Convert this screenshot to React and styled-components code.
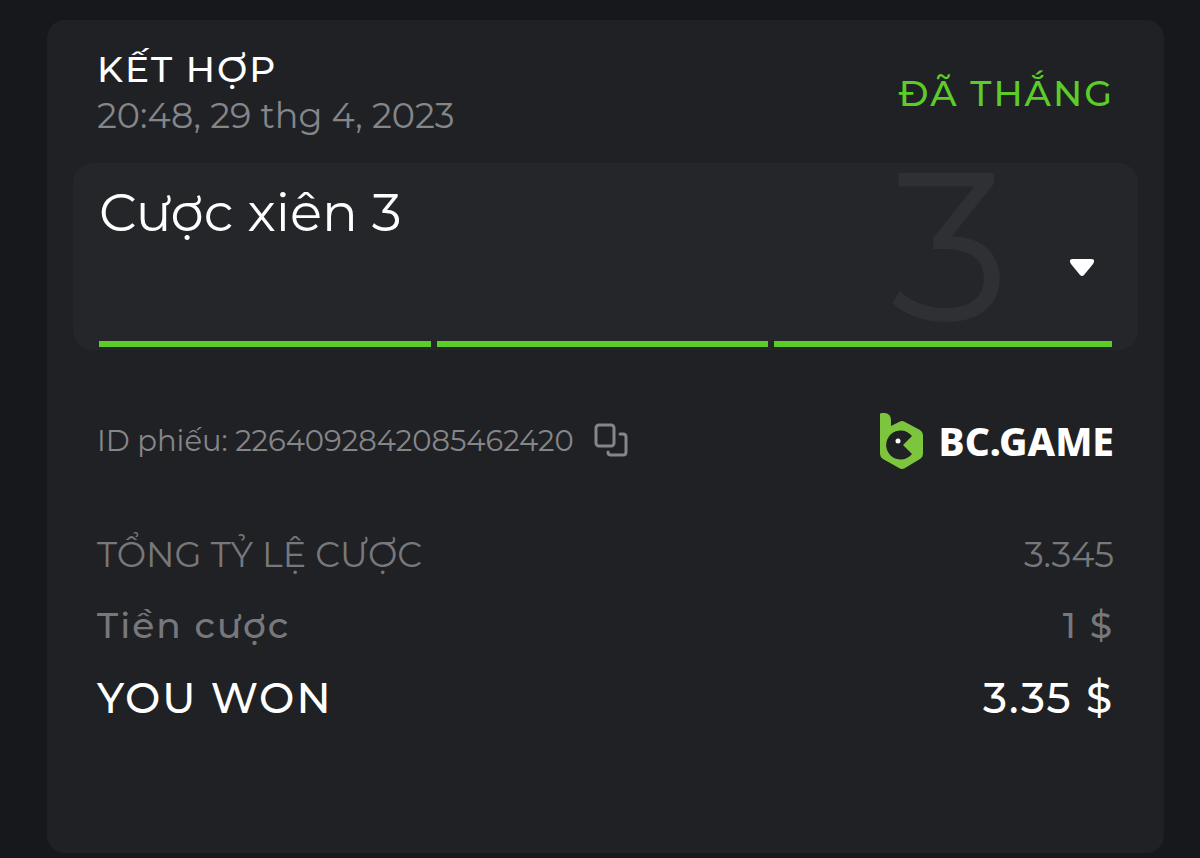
import React, { useState } from 'react'
import styled, { createGlobalStyle } from 'styled-components'

const legs = ['won', 'won', 'won']

const totals = [
    { label: 'TỔNG TỶ LỆ CƯỢC', value: '3.345' },
    { label: 'Tiền cược', value: '1 $', spaced: true },
    { label: 'YOU WON', value: '3.35 $', strong: true, spaced: true },
]

const ticketId = '2264092842085462420'

const CopyIcon = () => (
    <svg width='34' height='34' viewBox='0 0 34 34' fill='none' stroke='currentColor' strokeWidth='3' strokeLinecap='round'>
        <rect x='2' y='2' width='18' height='21' rx='3' />
        <path d='M26 11h3q3 0 3 3v15q0 3-3 3H17q-3 0-3-3' />
    </svg>
)

const LogoMark = () => (
    <svg width='44' height='58' viewBox='0 0 44 58'>
        <path fill='#7cc53d' d='M0 2Q0 1 2 1H5Q11 2 11 8V14L19 10Q22 8 25 10L40 18Q43 20 43 23V42Q43 45 40 47L25 56Q22 58 19 56L3 47Q0 45 0 42Z' />
        <path fill='#202124' d='M32 24L23 33L32 42A14.500 14.500 0 1 1 32 24Z' />
        <circle fill='#fff' cx='18' cy='29' r='2.500' />
    </svg>
)

const App = () => {

    const [open, setOpen] = useState(false)

    const copyId = () => {
        if (navigator.clipboard) navigator.clipboard.writeText(ticketId)
    }

    return <Page>
        <GlobalStyle />
        <Card>
            <Header>
                <div>
                    <Kind>KẾT HỢP</Kind>
                    <Placed>20:48, 29 thg 4, 2023</Placed>
                </div>
                <Status>ĐÃ THẮNG</Status>
            </Header>
            <Panel>
                <PanelBody>
                    <PanelTitle>Cược xiên 3</PanelTitle>
                    <Count aria-hidden='true'>3</Count>
                    <Toggle type='button' aria-label='Chi tiết' aria-expanded={open} onClick={() => setOpen(!open)}>
                        <svg width='24' height='18' viewBox='0 0 24 18'>
                            <path fill='currentColor' d='M3 0H21Q26 0 23 5L14 16Q12 18 10 16L1 5Q-2 0 3 0Z' />
                        </svg>
                    </Toggle>
                </PanelBody>
                <Legs>
                    {legs.map((leg, i) => <Leg key={i} $won={leg === 'won'} />)}
                </Legs>
            </Panel>
            <Ticket>
                <TicketId>
                    ID phiếu: {ticketId}
                    <CopyButton type='button' aria-label='Sao chép' onClick={copyId}><CopyIcon /></CopyButton>
                </TicketId>
                <Brand href='#'><LogoMark />BC.GAME</Brand>
            </Ticket>
            <Totals>
                {totals.map((row) => (
                    <TotalRow key={row.label} $strong={row.strong} $spaced={row.spaced}>
                        <dt>{row.label}</dt>
                        <dd>{row.value}</dd>
                    </TotalRow>
                ))}
            </Totals>
        </Card>
    </Page>
}

export default App

const GlobalStyle = createGlobalStyle`
    *{
        box-sizing: border-box;
    }

    body{
        margin: 0;
        background-color: #17181b;
        color: #fff;
        font-family: Montserrat, Inter, sans-serif;
    }

    h1, h2, p, dl, dd{
        margin: 0;
    }

    button{
        display: flex;
        padding: 0;
        border: none;
        background-color: transparent;
        color: inherit;
    }
`

const Page = styled.main`
    display: flex;
    min-height: 100vh;
    padding: 20px 36px 5px 47px;
`

const Card = styled.article`
    flex: 1;
    padding: 24px 26px;
    border-radius: 18px;
    background-color: #202124;
`

const Header = styled.header`
    display: flex;
    justify-content: space-between;
    align-items: center;
    padding: 0 24px 21px;
`

const Kind = styled.h1`
    font-size: 36px;
    font-weight: 500;
    line-height: 50px;
    letter-spacing: 2px;
`

const Placed = styled.p`
    padding-bottom: 4px;
    color: #85868a;
    font-size: 35px;
    line-height: 44px;
`

const Status = styled.p`
    color: #5ccc28;
    font-size: 36px;
    font-weight: 500;
    line-height: 50px;
    letter-spacing: 2px;
`

const Panel = styled.section`
    padding: 0 26px 3px;
    border-radius: 20px;
    background-color: #252629;
`

const PanelBody = styled.div`
    display: flex;
    align-items: center;
    padding-bottom: 14px;
`

const PanelTitle = styled.h2`
    flex: 1;
    align-self: flex-start;
    padding-top: 15px;
    font-size: 53px;
    font-weight: 400;
    line-height: 68px;
`

const Count = styled.span`
    margin-right: 60px;
    color: #2f3033;
    font-size: 212px;
    line-height: 164px;
`

const Toggle = styled.button`
    padding-top: 46px;
    margin-right: 18px;
`

const Legs = styled.div`
    display: grid;
    grid-template-columns: repeat(3, 1fr);
`

const Leg = styled.span`
    height: 6px;
    margin-right: 6px;
    background-color: ${({ $won }) => $won ? '#5ccc28' : '#85868a'};

    &:last-child{
        margin-right: 0;
    }
`

const Ticket = styled.div`
    display: flex;
    justify-content: space-between;
    align-items: center;
    padding: 62px 24px 50px;
`

const TicketId = styled.div`
    display: flex;
    align-items: center;
    gap: 20px;
    padding-bottom: 2px;
    color: #85868a;
    font-size: 29px;
`

const CopyButton = styled.button`
    color: #85868a;
`

const Brand = styled.a`
    display: flex;
    align-items: center;
    gap: 15px;
    color: #fff;
    font-family: 'Noto Sans', sans-serif;
    font-size: 39px;
    font-weight: 800;
    line-height: 58px;
    text-decoration: none;
`

const Totals = styled.dl`
    padding: 0 24px;
`

const TotalRow = styled.div`
    display: flex;
    justify-content: space-between;
    color: ${({ $strong }) => $strong ? '#fff' : '#77787c'};
    font-size: ${({ $strong, $spaced }) => $strong ? 42 : $spaced ? 36 : 35}px;
    font-weight: ${({ $spaced }) => $spaced ? 500 : 400};
    line-height: ${({ $strong }) => $strong ? 76 : 70}px;
    letter-spacing: ${({ $spaced }) => $spaced ? '2px' : 'normal'};
`
